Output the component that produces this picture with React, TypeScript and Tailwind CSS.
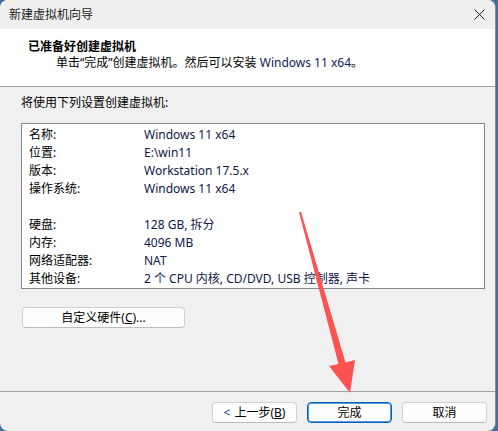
import React from "react";

const rows: [string, string][] = [
  ["名称:", "Windows 11 x64"],
  ["位置:", "E:\\win11"],
  ["版本:", "Workstation 17.5.x"],
  ["操作系统:", "Windows 11 x64"],
  ["", ""],
  ["硬盘:", "128 GB, 拆分"],
  ["内存:", "4096 MB"],
  ["网络适配器:", "NAT"],
  ["其他设备:", "2 个 CPU 内核, CD/DVD, USB 控制器, 声卡"],
];

const font = { fontFamily: '"Noto Sans", "Noto Sans CJK SC", sans-serif' };

function Btn({
  children,
  primary,
  className = "",
}: {
  children: React.ReactNode;
  primary?: boolean;
  className?: string;
}) {
  return (
    <div
      className={
        "flex h-[21px] items-center justify-center rounded-[4px] border text-[12px] leading-none text-black " +
        (primary
          ? "border-[#005fb8] bg-[#fdfdfd] shadow-[inset_0_0_0_1px_#5a9ad6] "
          : "border-[#d0d0d0] border-b-[#bcbcbc] bg-[#fdfdfd] ") +
        className
      }
    >
      {children}
    </div>
  );
}

export default function App() {
  return (
    <div className="relative h-[431px] w-[498px] overflow-hidden bg-[#3f6f9c]" style={font}>
      <div className="flex h-[431px] w-[496px] flex-col overflow-hidden rounded-[8px] border-r border-[#8c8c8c] bg-[#f0f0f0]">
        {/* title bar */}
        <div className="flex h-[29px] shrink-0 items-center justify-between bg-[#efefef] pl-[9px] pr-[9px]">
          <span className="text-[12px] leading-none text-[#1a1a1a]">新建虚拟机向导</span>
          <svg width="11" height="11" viewBox="0 0 11 11" className="mr-[1px]">
            <path d="M0.5 0.5 L10.5 10.5 M10.5 0.5 L0.5 10.5" stroke="#1f1f1f" strokeWidth="1" />
          </svg>
        </div>

        {/* header */}
        <div className="h-[57px] shrink-0 bg-white pl-[28px] pt-[10px]">
          <div className="text-[12px] font-bold leading-[16px] text-black">已准备好创建虚拟机</div>
          <div className="pl-[28px] text-[12px] leading-[16px] text-black">
            单击“完成”创建虚拟机。然后可以安装 <span className="text-[#10205a]">Windows 11 x64</span>。
          </div>
        </div>
        <div className="h-px shrink-0 bg-[#a0a0a0]" />

        {/* body */}
        <div className="flex flex-1 flex-col pl-[21px] pt-[8px]">
          <div className="text-[12px] leading-[16px] text-black">将使用下列设置创建虚拟机:</div>
          <div className="mt-[12px] h-[166px] w-[464px] border border-[#828790] bg-white pl-[7px] pt-[2px]">
            {rows.map(([k, v], i) => (
              <div key={i} className="flex h-[18px] items-center text-[12px] leading-none text-black">
                <span className="w-[115px] shrink-0">{k}</span>
                <span className="whitespace-nowrap text-[#10184a]">{v}</span>
              </div>
            ))}
          </div>
          <Btn className="ml-[1px] mt-[18px] w-[163px]">
            自定义硬件(<span className="underline underline-offset-1">C</span>)...
          </Btn>
        </div>

        {/* footer */}
        <div className="h-px shrink-0 bg-[#a0a0a0]" />
        <div className="flex h-[39px] shrink-0 justify-end gap-[10px] pr-[8px] pt-[10px]">
          <Btn className="w-[85px]">
            <span className="mr-[4px] text-[#0a3a8a]">&lt;</span>上一步(<span className="underline underline-offset-1">B</span>)
          </Btn>
          <Btn primary className="w-[85px]">
            完成
          </Btn>
          <Btn className="w-[85px]">取消</Btn>
        </div>
      </div>

      {/* red pointer arrow */}
      <svg className="pointer-events-none absolute left-0 top-0" width="498" height="431" viewBox="0 0 498 431">
        <polygon
          points="299,212.3 301,211.7 345.5,362.4 355,360 350,393 329,366 338.5,364"
          fill="#fb5352"
        />
      </svg>
    </div>
  );
}
